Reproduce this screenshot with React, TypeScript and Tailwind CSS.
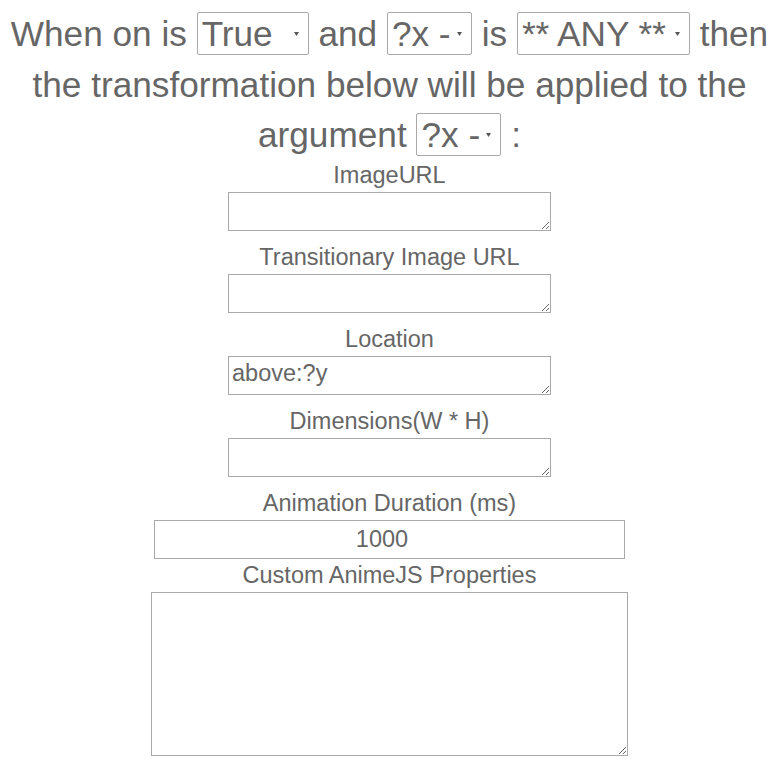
import React, { useState } from 'react';

const Arrow: React.FC = () => (
  <svg width="5" height="4" viewBox="0 0 5 4" className="shrink-0 mr-[9px]">
    <path d="M0 0 L5 0 L2.5 4 Z" fill="#555" />
  </svg>
);

interface DropProps {
  width: string;
  value: string;
  options: string[];
}

const Drop: React.FC<DropProps> = ({ width, value, options }) => {
  const [v, setV] = useState(value);
  return (
    <span
      className={`inline-flex items-center h-[43px] align-baseline border border-[#a9a9a9] rounded-[2px] bg-white overflow-hidden ${width}`}
    >
      <select
        value={v}
        onChange={(e) => setV(e.target.value)}
        className="appearance-none bg-transparent outline-none flex-1 min-w-0 h-full pl-[4px] text-[#666] leading-[41px]"
      >
        {options.map((o) => (
          <option key={o} value={o}>
            {o}
          </option>
        ))}
      </select>
      <Arrow />
    </span>
  );
};

const Field: React.FC<{ label: string; children: React.ReactNode; className?: string }> = ({
  label,
  children,
  className = ''
}) => (
  <div className={`flex flex-col items-center ${className}`}>
    <label className="block pt-[1px] leading-[27px]">{label}</label>
    <div className="mt-[3px] flex">{children}</div>
  </div>
);

const boxClass =
  'block border border-[#a9a9a9] bg-white text-[#666] px-[3px] pt-[3px] leading-[27px] outline-none';

export default function App() {
  const [location, setLocation] = useState('above:?y');
  const [duration, setDuration] = useState('1000');

  return (
    <div
      className="w-[779px] text-center text-[#666] bg-white min-h-[762px]"
      style={{ fontFamily: '"Liberation Sans", Arial, sans-serif' }}
    >
      <p className="pt-[9px] text-[35.2px] leading-[50.6px]">
        When on is <Drop width="w-[112px]" value="True" options={['True', 'False']} /> and{' '}
        <Drop width="w-[85px]" value="?x -" options={['?x -']} /> is{' '}
        <Drop width="w-[173px]" value="** ANY **" options={['** ANY **']} /> then the transformation
        below will be applied to the argument <Drop width="w-[85px]" value="?x -" options={['?x -']} /> :
      </p>

      <div className="text-[23.5px]">
        <Field label="ImageURL">
          <textarea className={`${boxClass} w-[323px] h-[39px]`} />
        </Field>
        <Field label="Transitionary Image URL" className="mt-[12px]">
          <textarea className={`${boxClass} w-[323px] h-[39px]`} />
        </Field>
        <Field label="Location" className="mt-[12px]">
          <textarea
            value={location}
            onChange={(e) => setLocation(e.target.value)}
            className={`${boxClass} w-[323px] h-[39px]`}
          />
        </Field>
        <Field label="Dimensions(W * H)" className="mt-[12px]">
          <textarea className={`${boxClass} w-[323px] h-[39px]`} />
        </Field>
        <Field label="Animation Duration (ms)" className="mt-[12px]">
          <input
            type="text"
            value={duration}
            onChange={(e) => setDuration(e.target.value)}
            className="block w-[471px] h-[39px] border border-[#a9a9a9] bg-white text-center text-[#666] pl-[2px] pr-[17px] outline-none"
          />
        </Field>
        <Field label="Custom AnimeJS Properties" className="mt-[2px]">
          <textarea className={`${boxClass} w-[477px] h-[164px]`} />
        </Field>
      </div>
    </div>
  );
}
